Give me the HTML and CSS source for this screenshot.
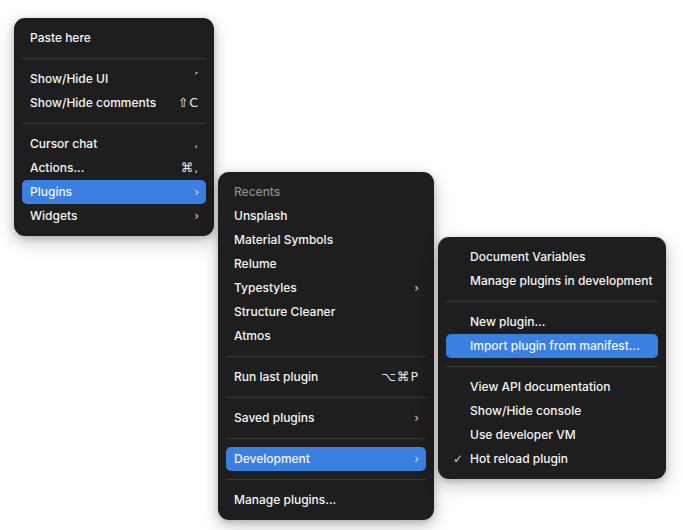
FILE: index.html
```html
<!DOCTYPE html>
<html lang="en">
<head>
    <meta charset="UTF-8">
    <meta name="viewport" content="width=device-width, initial-scale=1.0">
    <title>Canvas context menu</title>
    <link rel="stylesheet" href="styles.css">
</head>
<body>
    <div class="canvas">
        <!-- Main context menu -->
        <div class="menu menu-main">
            <div class="menu-item"><span>Paste here</span></div>
            <div class="menu-sep"></div>
            <div class="menu-item"><span>Show/Hide UI</span><span class="shortcut high">′</span></div>
            <div class="menu-item"><span>Show/Hide comments</span><span class="shortcut">⇧C</span></div>
            <div class="menu-sep"></div>
            <div class="menu-item"><span>Cursor chat</span><span class="shortcut low">,</span></div>
            <div class="menu-item"><span>Actions...</span><span class="shortcut">⌘<span class="low">,</span></span></div>
            <div class="menu-item active"><span>Plugins</span><span class="chevron">›</span></div>
            <div class="menu-item"><span>Widgets</span><span class="chevron">›</span></div>
        </div>

        <!-- Plugins submenu -->
        <div class="menu menu-plugins">
            <div class="menu-item menu-label"><span>Recents</span></div>
            <div class="menu-item"><span>Unsplash</span></div>
            <div class="menu-item"><span>Material Symbols</span></div>
            <div class="menu-item"><span>Relume</span></div>
            <div class="menu-item"><span>Typestyles</span><span class="chevron">›</span></div>
            <div class="menu-item"><span>Structure Cleaner</span></div>
            <div class="menu-item"><span>Atmos</span></div>
            <div class="menu-sep"></div>
            <div class="menu-item"><span>Run last plugin</span><span class="shortcut">⌥⌘P</span></div>
            <div class="menu-sep"></div>
            <div class="menu-item"><span>Saved plugins</span><span class="chevron">›</span></div>
            <div class="menu-sep"></div>
            <div class="menu-item active"><span>Development</span><span class="chevron">›</span></div>
            <div class="menu-sep"></div>
            <div class="menu-item"><span>Manage plugins...</span></div>
        </div>

        <!-- Development submenu -->
        <div class="menu menu-dev">
            <div class="menu-item checkable"><span>Document Variables</span></div>
            <div class="menu-item checkable"><span>Manage plugins in development</span></div>
            <div class="menu-sep"></div>
            <div class="menu-item checkable"><span>New plugin...</span></div>
            <div class="menu-item checkable active"><span>Import plugin from manifest...</span></div>
            <div class="menu-sep"></div>
            <div class="menu-item checkable"><span>View API documentation</span></div>
            <div class="menu-item checkable"><span>Show/Hide console</span></div>
            <div class="menu-item checkable"><span>Use developer VM</span></div>
            <div class="menu-item checkable checked"><span class="check">✓</span><span>Hot reload plugin</span></div>
        </div>
    </div>
</body>
</html>
```

FILE: styles.css
```css
:root {
    --menu-bg: #1e1e1e;
    --menu-text: #f5f5f5;
    --menu-muted: #8c8c8c;
    --menu-sep: #383838;
    --menu-active: #3b80e0;
    --menu-shadow: 0 6px 18px rgba(0, 0, 0, 0.22), 0 2px 6px rgba(0, 0, 0, 0.18);
}

* {
    margin: 0;
    padding: 0;
    box-sizing: border-box;
}

body {
    background-color: #ffffff;
    font-family: "Inter", "DejaVu Sans", sans-serif;
    font-size: 12px;
    font-weight: 500;
    color: var(--menu-text);
}

.canvas {
    position: relative;
    width: 683px;
    height: 530px;
}

.menu {
    position: absolute;
    background-color: var(--menu-bg);
    border-radius: 11px;
    padding: 8px;
    box-shadow: var(--menu-shadow);
}

.menu-main {
    left: 14px;
    top: 18px;
    width: 200px;
}

.menu-plugins {
    left: 218px;
    top: 172px;
    width: 216px;
}

.menu-dev {
    left: 438px;
    top: 237px;
    width: 228px;
}

.menu-item {
    display: flex;
    align-items: center;
    justify-content: space-between;
    height: 24px;
    padding: 0 7px 0 8px;
    border-radius: 5px;
    white-space: nowrap;
    line-height: 24px;
}

.menu-item.active {
    background-color: var(--menu-active);
}

.menu-label {
    color: var(--menu-muted);
}

.menu-sep {
    height: 1px;
    margin: 8px 0;
    background-color: var(--menu-sep);
}

.shortcut {
    color: #e6e6e6;
    font-family: "DejaVu Sans", sans-serif;
    font-size: 12.5px;
    font-weight: normal;
    letter-spacing: 1px;
}

.shortcut.high {
    font-size: 14px;
    position: relative;
    top: -2px;
}

.shortcut .low,
.shortcut.low {
    font-size: 11px;
}

.chevron {
    font-family: "DejaVu Sans", sans-serif;
    font-size: 12px;
    color: #dcdcdc;
}

.menu-item.checkable {
    justify-content: flex-start;
    padding-left: 24px;
    position: relative;
}

.check {
    position: absolute;
    left: 7px;
    color: #cfcfcf;
    font-family: "DejaVu Sans", sans-serif;
    font-size: 12px;
}
```
